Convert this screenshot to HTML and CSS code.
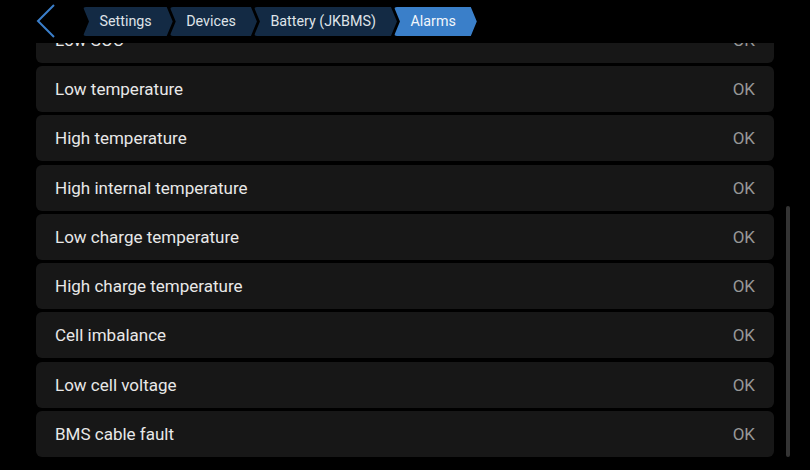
FILE: index.html
```html
<!DOCTYPE html>
<html>
<head>
<meta charset="utf-8">
<link rel="stylesheet" href="styles.css">
</head>
<body>
<div class="screen">
  <header class="header">
    <div class="back">
      <svg width="20" height="34" viewBox="0 0 20 34"><polyline points="18,1 2,17 18,33" fill="none" stroke="#3b7fcb" stroke-width="2"/></svg>
    </div>
    <nav class="crumbs">
      <span class="crumb">Settings</span>
      <span class="crumb">Devices</span>
      <span class="crumb">Battery (JKBMS)</span>
      <span class="crumb active">Alarms</span>
    </nav>
  </header>
  <div class="viewport">
    <div class="list">
      <div class="row"><span class="label">Low SOC</span><span class="value">OK</span></div>
      <div class="row"><span class="label">Low temperature</span><span class="value">OK</span></div>
      <div class="row"><span class="label">High temperature</span><span class="value">OK</span></div>
      <div class="row"><span class="label">High internal temperature</span><span class="value">OK</span></div>
      <div class="row"><span class="label">Low charge temperature</span><span class="value">OK</span></div>
      <div class="row"><span class="label">High charge temperature</span><span class="value">OK</span></div>
      <div class="row"><span class="label">Cell imbalance</span><span class="value">OK</span></div>
      <div class="row"><span class="label">Low cell voltage</span><span class="value">OK</span></div>
      <div class="row"><span class="label">BMS cable fault</span><span class="value">OK</span></div>
    </div>
    <div class="scrollbar"></div>
  </div>
</div>
</body>
</html>
```

FILE: styles.css
```css
html, body {
  margin: 0;
  padding: 0;
  background: #000;
}
body {
  font-family: Roboto, "Liberation Sans", sans-serif;
  width: 810px;
  height: 470px;
  overflow: hidden;
}
.screen {
  width: 810px;
  height: 470px;
  display: flex;
  flex-direction: column;
}
.header {
  height: 43px;
  flex: none;
  display: flex;
  align-items: flex-start;
  position: relative;
  z-index: 2;
  background: #000;
}
.back {
  margin: 4px 0 0 36px;
  width: 20px;
  height: 34px;
}
.back svg { display: block; }
.crumbs {
  display: flex;
  margin: 7px 0 0 27px;
}
.crumb {
  height: 29px;
  line-height: 29px;
  font-size: 14.3px;
  color: #dfe3e8;
  background: #132a44;
  padding: 0 21px 0 16.5px;
  clip-path: polygon(0 0, calc(100% - 6px) 0, 100% 50%, calc(100% - 6px) 100%, 0 100%, 6px 50%);
  border-radius: 3px;
}
.crumb + .crumb {
  margin-left: -3px;
}
.crumb.active {
  background: #3a7fc9;
  color: #f2f6fb;
}
.viewport {
  flex: 1;
  position: relative;
  overflow: hidden;
}
.list {
  margin: -26.3px 36px 0 36px;
  display: flex;
  flex-direction: column;
  gap: 3.3px;
}
.row {
  height: 46px;
  flex: none;
  background: #171717;
  border-radius: 6px;
  display: flex;
  align-items: center;
  justify-content: space-between;
  padding: 0 19px;
  font-size: 17px;
}
.label { color: #e8e8e8; }
.value { color: #979797; }
.scrollbar {
  position: absolute;
  right: 20px;
  top: 163px;
  width: 4px;
  height: 251px;
  border-radius: 2px;
  background: #343434;
}
```
